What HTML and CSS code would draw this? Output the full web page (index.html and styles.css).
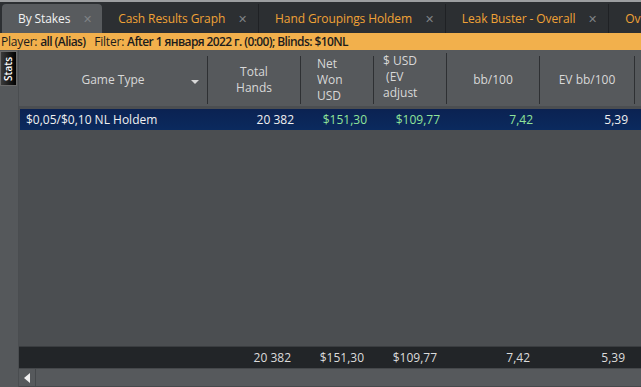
FILE: index.html
```html
<!DOCTYPE html>
<html>

<head>
    <title>By Stakes</title>
    <link rel="stylesheet" href="styles.css">
</head>

<body>
    <!-- Report tabs -->
    <div class="tabs">
        <div class="tab active">By Stakes <span class="close">&#x2715;</span></div>
        <div class="tab">Cash Results Graph <span class="close">&#x2715;</span></div>
        <div class="tab">Hand Groupings Holdem <span class="close">&#x2715;</span></div>
        <div class="tab">Leak Buster - Overall <span class="close">&#x2715;</span></div>
        <div class="tab">Overall</div>
    </div>

    <!-- Filter line -->
    <div class="filter">
        Player: <b>all (Alias)</b>&nbsp;&nbsp; Filter: <b>After 1 января 2022 г. (0:00); Blinds: $10NL</b>
    </div>

    <div class="main">
        <div class="side">
            <div class="stats-tab"><span>Stats</span></div>
        </div>

        <div class="grid">
            <div class="head cols">
                <div class="hcell center">Game Type <span class="arrow"></span></div>
                <div class="hcell center">Total<br>Hands</div>
                <div class="hcell left">Net<br>Won<br>USD</div>
                <div class="hcell left top">$ USD<br>&nbsp;(EV<br>adjust</div>
                <div class="hcell center">bb/100</div>
                <div class="hcell center">EV bb/100</div>
                <div class="hcell"></div>
            </div>

            <div class="body">
                <div class="row cols selected">
                    <div class="cell">$0,05/$0,10 NL Holdem</div>
                    <div class="cell num">20 382</div>
                    <div class="cell num green">$151,30</div>
                    <div class="cell num green">$109,77</div>
                    <div class="cell num green">7,42</div>
                    <div class="cell num">5,39</div>
                    <div class="cell"></div>
                </div>
            </div>

            <div class="totals cols">
                <div class="cell"></div>
                <div class="cell num">20 382</div>
                <div class="cell num">$151,30</div>
                <div class="cell num">$109,77</div>
                <div class="cell num">7,42</div>
                <div class="cell num">5,39</div>
                <div class="cell"></div>
            </div>

            <div class="hscroll">
                <div class="scroll-btn"><span class="tri"></span></div>
            </div>
        </div>
    </div>
</body>

</html>
```

FILE: styles.css
```css
body {
    margin: 0;
    width: 641px;
    height: 387px;
    overflow: hidden;
    font-family: 'Open Sans', 'Noto Sans', sans-serif;
    font-size: 12px;
    background-color: #55585b;
    color: #e6e6e6;
}

/* tabs */
.tabs {
    display: flex;
    height: 31px;
    border-top: 2px solid #9c9ea0;
    background-color: #2c2f32;
    white-space: nowrap;
    overflow: hidden;
}

.tab {
    display: flex;
    align-items: center;
    padding: 0 11px 0 16px;
    margin-top: 2px;
    color: #f0a236;
    border-right: 1px solid #1f2124;
    letter-spacing: -0.1px;
}

.tab.active {
    margin-left: 2px;
    background-color: #585b5e;
    color: #f2f2f2;
    border-radius: 4px 4px 0 0;
    border-right: none;
    padding-right: 10px;
}

.close {
    margin-left: 13px;
    color: #7f8285;
    font-size: 11px;
}

/* filter */
.filter {
    height: 17px;
    line-height: 17px;
    padding-left: 1px;
    background-color: #f2b04c;
    color: #1c1c1c;
    white-space: nowrap;
    overflow: hidden;
    letter-spacing: -0.2px;
}

.filter b {
    font-weight: 600;
    letter-spacing: -0.6px;
}

/* main area */
.main {
    display: flex;
    height: 337px;
}

.side {
    width: 18px;
    flex: none;
    padding-top: 1px;
    border-right: 1px solid #4a4d50;
}

.stats-tab {
    width: 17px;
    height: 35px;
    background: linear-gradient(to right, #3a3a3a, #000);
    border: 1px solid #6a6a6a;
    box-sizing: border-box;
    display: flex;
    align-items: center;
    justify-content: center;
}

.stats-tab span {
    transform: rotate(-90deg);
    font-size: 10px;
    font-weight: 600;
    color: #fff;
}

.grid {
    flex: 1;
    display: flex;
    flex-direction: column;
    min-width: 0;
    overflow: hidden;
}

.cols {
    display: grid;
    grid-template-columns: 189px 93px 73px 73px 93px 95px 1fr;
}

.head {
    height: 57px;
    background-color: #56595c;
    border-bottom: 1px solid #4b4e51;
    color: #d8d8d8;
    line-height: 16px;
    padding-top: 1px;
    box-sizing: border-box;
}

.hcell {
    position: relative;
    display: flex;
    align-items: center;
    border-right: 1px solid #2e3033;
    margin: 5px 0 2px;
    overflow: hidden;
}

.hcell:last-child {
    border-right: none;
}

.hcell.center {
    justify-content: center;
    text-align: center;
}

.hcell.left {
    padding-left: 16px;
}

.hcell.top {
    align-items: flex-start;
    padding-left: 9px;
    margin-top: 2px;
}

.arrow {
    position: absolute;
    right: 8px;
    top: 24px;
    border-left: 4px solid transparent;
    border-right: 4px solid transparent;
    border-top: 4px solid #d8d8d8;
}

.body {
    flex: 1;
    background-color: #4b4e51;
    padding: 2px 0 0 1px;
}

.row {
    height: 21px;
    line-height: 21px;
    background: linear-gradient(to bottom, #0b2252, #0b2a5e);
    color: #f0f0f0;
}

.cell {
    padding: 0 8px 0 6px;
    white-space: nowrap;
    overflow: hidden;
}

.num {
    text-align: right;
}

.green {
    color: #90e49a;
}

.totals {
    height: 21px;
    line-height: 21px;
    background-color: #222528;
    color: #dcdcdc;
    border-top: 1px solid #3a3d40;
}

.totals .cell {
    padding-right: 10px;
}

.hscroll {
    height: 17px;
    background-color: #56595c;
    border-top: 1px solid #45484b;
    border-bottom: 1px solid #45484b;
    display: flex;
}

.scroll-btn {
    width: 16px;
    border-right: 1px solid #45484b;
    display: flex;
    align-items: center;
    justify-content: center;
}

.tri {
    border-top: 5px solid transparent;
    border-bottom: 5px solid transparent;
    border-right: 6px solid #f0f0f0;
}
```
